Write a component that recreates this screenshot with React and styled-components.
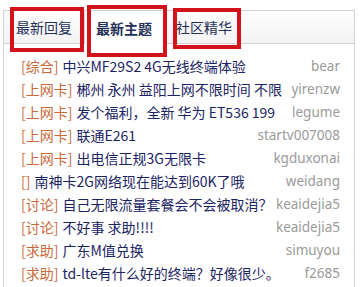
import React from "react";
import styled, { createGlobalStyle } from "styled-components";

const Global = createGlobalStyle`
  html, body { margin: 0; padding: 0; background: #fff; }
  body { font-family: "Noto Sans", "Noto Sans CJK SC", sans-serif; }
`;

const Page = styled.div`
  position: relative;
  width: 364px;
  height: 287px;
  overflow: hidden;
  padding: 10px 0 0 3px;
  box-sizing: border-box;
`;

const Box = styled.div`
  width: 352px;
  border: 1px solid #d2d2d2;
  border-bottom: none;
  height: 300px;
  box-sizing: border-box;
`;

const TabBar = styled.div`
  display: flex;
  height: 32px;
  background: linear-gradient(#fdfdfd, #f3f3f3);
  border-bottom: 1px solid #d2d2d2;
`;

const Tab = styled.div`
  width: 80px;
  height: ${(p) => (p.$active ? "33px" : "32px")};
  box-sizing: border-box;
  display: flex;
  align-items: center;
  justify-content: center;
  font-size: 14px;
  font-family: "Noto Sans CJK SC", sans-serif;
  color: #1f3057;
  font-weight: ${(p) => (p.$active ? 700 : 400)};
  background: ${(p) => (p.$active ? "#fff" : "transparent")};
  border-left: 1px solid ${(p) => (p.$active ? "#d2d2d2" : "transparent")};
  border-right: 1px solid ${(p) => (p.$active ? "#d2d2d2" : "transparent")};
`;

const List = styled.ul`
  list-style: none;
  margin: 0;
  padding: 10px 14px 0 17px;
`;

const Row = styled.li`
  display: flex;
  justify-content: space-between;
  align-items: center;
  height: 23px;
  font-size: 14px;
  white-space: nowrap;
`;

const Title = styled.span`
  color: #1b2463;
  font-family: "Noto Sans CJK SC", sans-serif;
`;

const Cat = styled.span`
  color: #c9693c;
  margin-right: 4px;
`;

const Author = styled.span`
  color: #9a9a9a;
  font-size: 13.5px;
  font-family: "Noto Sans", sans-serif;
`;

const Mark = styled.div`
  position: absolute;
  border: 4px solid #d3121b;
  box-sizing: border-box;
  pointer-events: none;
`;

const rows = [
  ["综合", "中兴MF29S2 4G无线终端体验", "bear"],
  ["上网卡", "郴州 永州 益阳上网不限时间 不限", "yirenzw"],
  ["上网卡", "发个福利，全新 华为 ET536 199", "legume"],
  ["上网卡", "联通E261", "startv007008"],
  ["上网卡", "出电信正规3G无限卡", "kgduxonai"],
  ["", "南神卡2G网络现在能达到60K了哦", "weidang"],
  ["讨论", "自己无限流量套餐会不会被取消？", "keaidejia5"],
  ["讨论", "不好事 求助!!!!", "keaidejia5"],
  ["求助", "广东M值兑换", "simuyou"],
  ["求助", "td-lte有什么好的终端？好像很少。", "f2685"],
];

const marks = [
  { left: 10, top: 7, width: 74, height: 45 },
  { left: 87, top: 5, width: 80, height: 52 },
  { left: 173, top: 8, width: 68, height: 41 },
];

export default function App() {
  return (
    <>
      <Global />
      <Page>
        <Box>
          <TabBar>
            <Tab>最新回复</Tab>
            <Tab $active>最新主题</Tab>
            <Tab>社区精华</Tab>
          </TabBar>
          <List>
            {rows.map(([c, t, a], i) => (
              <Row key={i}>
                <Title>
                  <Cat>[{c}]</Cat>
                  {t}
                </Title>
                <Author>{a}</Author>
              </Row>
            ))}
          </List>
        </Box>
        {marks.map((m, i) => (
          <Mark key={i} style={m} />
        ))}
      </Page>
    </>
  );
}
